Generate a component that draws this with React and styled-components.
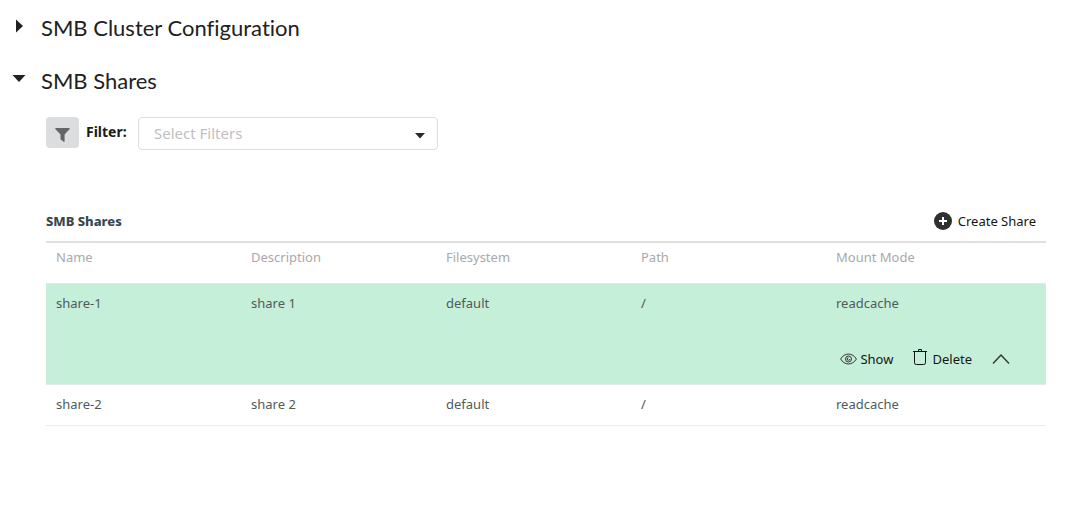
import React, { useState } from "react";
import styled, { createGlobalStyle } from "styled-components";

const GlobalStyle = createGlobalStyle`
  * { box-sizing: border-box; }
  body {
    margin: 0;
    background: #fff;
    color: #212121;
    font-family: "Noto Sans", "Open Sans", sans-serif;
    font-size: 13px;
    line-height: 18px;
  }
`;

const Page = styled.main`
  padding: 11px 35px 40px 0;
`;

const Heading = styled.h2`
  margin: 0 0 19px;
  font: 400 22px/34px Lato, sans-serif;
  font-variant-ligatures: none;
`;

const Toggle = styled.button`
  display: flex;
  align-items: center;
  gap: 15px;
  padding: 0 0 0 12px;
  border: 0;
  background: none;
  color: inherit;
  font: inherit;
  cursor: pointer;
`;

const Arrow = styled.svg`
  width: 14px;
  height: 14px;
  margin-bottom: 4px;
  fill: #212121;
`;

const Content = styled.div`
  padding-left: 46px;
`;

const FilterBar = styled.div`
  display: flex;
  align-items: flex-start;
  margin-bottom: 59px;
`;

const FilterButton = styled.button`
  display: flex;
  align-items: center;
  justify-content: center;
  width: 33px;
  height: 31px;
  padding: 3px 0 0;
  border: 0;
  border-radius: 4px;
  background: #dcdddf;
  cursor: pointer;
`;

const FilterLabel = styled.label`
  width: 59px;
  padding: 6px 0 0 7px;
  color: #1b1c1d;
  font-weight: 700;
  font-size: 14px;
  white-space: nowrap;
`;

const SelectBox = styled.div`
  position: relative;
  width: 300px;
`;

const Select = styled.select`
  display: block;
  width: 100%;
  height: 33px;
  padding: 0 36px 2px 15px;
  border: 1px solid #dededf;
  border-radius: 4px;
  appearance: none;
  background: #fff;
  color: #bfbfbf;
  font: 400 15px/20px "Noto Sans", sans-serif;
`;

const SelectArrow = styled.svg`
  position: absolute;
  top: 16px;
  right: 13px;
  width: 10px;
  height: 6px;
  fill: #2b2b2b;
  pointer-events: none;
`;

const TableHeader = styled.header`
  display: flex;
  align-items: center;
  justify-content: space-between;
  height: 32px;
  padding: 0 10px 8px 0;
`;

const TableTitle = styled.h3`
  margin: 0;
  color: #37474f;
  font-weight: 800;
  font-size: 13px;
`;

const Action = styled.button`
  display: flex;
  align-items: center;
  gap: ${(p) => p.$gap}px;
  padding: 0;
  border: 0;
  background: none;
  color: #151515;
  font: 400 13px/18px "Noto Sans", sans-serif;
  cursor: pointer;
`;

const Table = styled.table`
  width: 100%;
  border-top: 2px solid #e0e0e0;
  border-collapse: separate;
  border-spacing: 0;
  table-layout: fixed;
`;

const HeadCell = styled.th`
  width: ${(p) => p.$width};
  height: 41px;
  padding: 5px 10px 0;
  border-bottom: 1px solid #e3e6e4;
  color: #a9a9a9;
  font-weight: 400;
  font-size: 13px;
  text-align: left;
  vertical-align: top;
`;

const Row = styled.tr`
  background: ${(p) => (p.$selected ? "#c5efd9" : "#fff")};
`;

const Cell = styled.td`
  height: 41px;
  padding: 0 10px 3px;
  border-bottom: ${(p) => (p.$open ? "0" : "1px solid #ececec")};
  color: #4f5b5b;
  font-size: 13px;
`;

const ActionCell = styled.td`
  height: 60px;
  padding: 0 36px 0 10px;
  border-bottom: 1px solid #e6ebe8;
`;

const Actions = styled.div`
  display: flex;
  justify-content: flex-end;
  align-items: center;
  gap: 20px;
  padding-top: 8px;
`;

const TrashIcon = styled.svg`
  margin-bottom: 4px;
`;

const columns = [
  ["Name", "19.5%"],
  ["Description", "19.5%"],
  ["Filesystem", "19.5%"],
  ["Path", "19.5%"],
  ["Mount Mode", "22%"],
];

const shares = [
  { name: "share-1", description: "share 1", filesystem: "default", path: "/", mode: "readcache" },
  { name: "share-2", description: "share 2", filesystem: "default", path: "/", mode: "readcache" },
];

function Section({ title, open, onToggle }) {
  return (
    <Heading>
      <Toggle type="button" aria-expanded={open} onClick={onToggle}>
        <Arrow viewBox="0 0 14 14" aria-hidden="true">
          <path d={open ? "M0.5 3h13L7 10z" : "M4 0.5v13l7-6.5z"} />
        </Arrow>
        {title}
      </Toggle>
    </Heading>
  );
}

function ShareRow({ share, open, onToggle }) {
  return (
    <>
      <Row $selected={open} onClick={onToggle}>
        {Object.values(share).map((value, i) => (
          <Cell key={i} $open={open}>{value}</Cell>
        ))}
      </Row>
      {open && (
        <Row $selected>
          <ActionCell colSpan={5}>
            <Actions>
              <Action type="button" $gap={3}>
                <svg width="17" height="12" viewBox="0 0 17 12" fill="none" stroke="#333" aria-hidden="true">
                  <path d="M.6 6C4.5-.6 12.5-.6 16.4 6C12.5 12.6 4.5 12.6.6 6z" />
                  <circle cx="8.5" cy="6" r="3" />
                  <path d="M8.5 4.7a1.3 1.3 0 1 0 1.3 1.3" />
                </svg>
                Show
              </Action>
              <Action type="button" $gap={5}>
                <TrashIcon width="14" height="16" viewBox="0 0 14 16" fill="none" stroke="#111" aria-hidden="true">
                  <path d="M0 2.5h14M5.5 2V.5h3V2M1.5 2.5v11.2q0 1.8 1.8 1.8h7.4q1.8 0 1.8-1.8V2.5" />
                </TrashIcon>
                Delete
              </Action>
              <Action type="button" aria-label="Collapse" onClick={onToggle}>
                <svg width="18" height="12" viewBox="0 0 18 12" fill="none" stroke="#333" strokeWidth="1.4" aria-hidden="true">
                  <path d="M1 10.5L9 2l8 8.5" />
                </svg>
              </Action>
            </Actions>
          </ActionCell>
        </Row>
      )}
    </>
  );
}

export default function App() {
  const [clusterOpen, setClusterOpen] = useState(false);
  const [sharesOpen, setSharesOpen] = useState(true);
  const [selected, setSelected] = useState("share-1");

  return (
    <>
      <GlobalStyle />
      <Page>
        <Section title="SMB Cluster Configuration" open={clusterOpen} onToggle={() => setClusterOpen(!clusterOpen)} />
        <Section title="SMB Shares" open={sharesOpen} onToggle={() => setSharesOpen(!sharesOpen)} />
        {sharesOpen && (
          <Content>
            <FilterBar>
              <FilterButton type="button" aria-label="Filter shares">
                <svg width="15" height="15" viewBox="0 0 15 15" fill="#666" aria-hidden="true">
                  <path d="M.5 1h14q.5.7 0 1.3L9.6 7.6v6.6q-.2.8-1 .5L6 12.7q-.5-.4-.5-1V7.6L.5 2.3Q0 1.6.5 1z" />
                </svg>
              </FilterButton>
              <FilterLabel htmlFor="filters">Filter:</FilterLabel>
              <SelectBox>
                <Select id="filters" defaultValue="">
                  <option value="">Select Filters</option>
                </Select>
                <SelectArrow viewBox="0 0 10 6" aria-hidden="true">
                  <path d="M0 0h10L5 5.5z" />
                </SelectArrow>
              </SelectBox>
            </FilterBar>
            <TableHeader>
              <TableTitle>SMB Shares</TableTitle>
              <Action type="button" $gap={6}>
                <svg width="18" height="18" viewBox="0 0 18 18" aria-hidden="true">
                  <circle cx="9" cy="9" r="9" fill="#303030" />
                  <path d="M9 5v8M5 9h8" stroke="#fff" strokeWidth="2" />
                </svg>
                Create Share
              </Action>
            </TableHeader>
            <Table>
              <thead>
                <tr>
                  {columns.map(([label, width]) => (
                    <HeadCell key={label} scope="col" $width={width}>{label}</HeadCell>
                  ))}
                </tr>
              </thead>
              <tbody>
                {shares.map((share) => (
                  <ShareRow
                    key={share.name}
                    share={share}
                    open={selected === share.name}
                    onToggle={() => setSelected(selected === share.name ? null : share.name)}
                  />
                ))}
              </tbody>
            </Table>
          </Content>
        )}
      </Page>
    </>
  );
}
